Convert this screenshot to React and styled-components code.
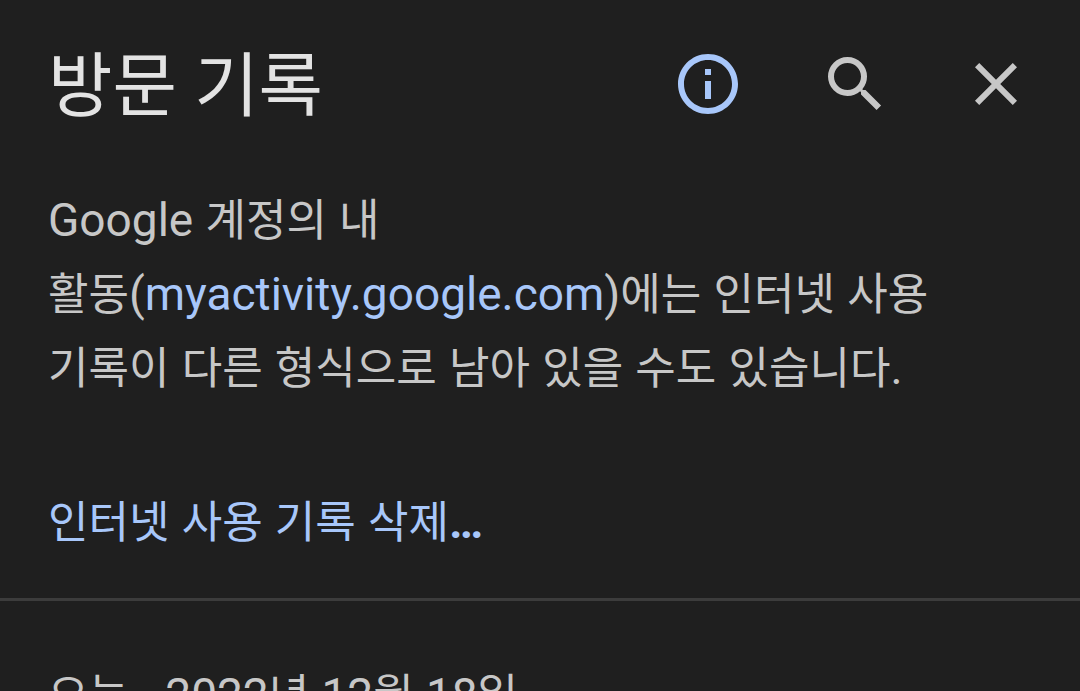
import React from 'react';
import styled, {createGlobalStyle} from 'styled-components';
import {MdClose, MdOutlineInfo} from 'react-icons/md';

const SearchIcon = () => (
   <svg width="72" height="72" viewBox="-1 0 24 24" fill="currentColor" aria-hidden="true">
      <path d="M15.5 14h-.79l-.28-.27A6.47 6.47 0 0 0 16 9.5 6.5 6.5 0 1 0 9.5 16c1.61 0 3.09-.59 4.23-1.57l.27.28v.79l5.2 5.19 1.49-1.49-5.19-5.2zm-6 0C7.01 14 5 11.99 5 9.5S7.01 5 9.5 5 14 7.01 14 9.5 11.99 14 9.5 14z"/>
   </svg>
);

const App = () => {
   return (
      <>
         <GlobalStyle/>
         <Page>
            <Toolbar>
               <Title>방문 기록</Title>
               <Actions>
                  <IconButton type="button" aria-label="정보" $active>
                     <MdOutlineInfo size={72}/>
                  </IconButton>
                  <IconButton type="button" aria-label="검색">
                     <SearchIcon/>
                  </IconButton>
                  <IconButton type="button" aria-label="닫기">
                     <MdClose size={72}/>
                  </IconButton>
               </Actions>
            </Toolbar>
            <Notice>
               <Latin>Google</Latin> 계정의 내<br/>
               활동<Latin>(<NoticeLink href="#myactivity">myactivity.google.com</NoticeLink>)</Latin>에는 인터넷 사용<br/>
               기록이 다른 형식으로 남아 있을 수도 있습니다<Latin>.</Latin>
            </Notice>
            <ClearButton type="button">인터넷 사용 기록 삭제<Latin $bold>…</Latin></ClearButton>
            <DateHeading>
               오늘 <Latin>- 2022</Latin>년 <Latin>12</Latin>월 <Latin>18</Latin>일
            </DateHeading>
         </Page>
      </>
   );
};

const GlobalStyle = createGlobalStyle`
  * {
    box-sizing: border-box;
    margin: 0;
  }

  html, body {
    height: 100%;
    overflow: hidden;
    background: #1f1f1f;
  }

  body {
    font-family: "Liberation Sans", "Noto Sans CJK KR", sans-serif;
    color: #c7c7c7;
  }
`;

const Page = styled.main`
  width: 100%;
`;

const Toolbar = styled.header`
  display: flex;
  align-items: center;
  justify-content: space-between;
  height: 168px;
  padding: 0 48px;
`;

const Title = styled.h1`
  padding-top: 6px;
  font-family: Roboto, "Noto Sans CJK KR", sans-serif;
  font-size: 70px;
  font-weight: 400;
  line-height: 96px;
  color: #e3e3e3;
`;

const Actions = styled.div`
  display: flex;
  gap: 72px;
`;

const IconButton = styled.button`
  display: flex;
  padding: 0;
  border: none;
  background: none;
  color: ${({$active}) => $active ? '#a8c7fa' : '#c7c7c7'};
  cursor: pointer;
`;

const Latin = styled.span`
  font-family: Roboto, sans-serif;
  font-size: 46px;
  font-weight: ${({$bold}) => $bold ? 700 : 400};
  line-height: 1;
`;

const Notice = styled.p`
  padding: 16px 48px 0;
  font-size: 44px;
  line-height: 74px;
`;

const NoticeLink = styled.a`
  color: #a8c7fa;
  text-decoration: none;
`;

const ClearButton = styled.button`
  display: block;
  width: 100%;
  padding: 78px 48px 36px;
  border: none;
  border-bottom: 3px solid #3c3c3c;
  background: none;
  color: #a8c7fa;
  font-family: inherit;
  font-size: 44px;
  font-weight: 400;
  line-height: 78px;
  text-align: left;
  cursor: pointer;
`;

const DateHeading = styled.h2`
  padding: 58px 48px 0;
  font-size: 44px;
  font-weight: 400;
  line-height: 74px;
  white-space: nowrap;
`;

export default App;
